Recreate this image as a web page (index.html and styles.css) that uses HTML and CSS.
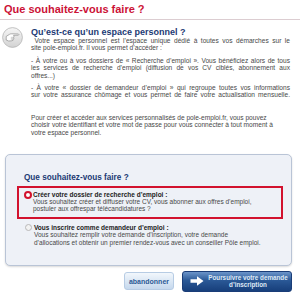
FILE: index.html
```html
<!DOCTYPE html>
<html lang="fr">
<head>
  <meta charset="UTF-8" />
  <title>Que souhaitez-vous faire ?</title>
  <link rel="stylesheet" href="styles.css">
</head>
<body>
  <h1 class="page-title">Que souhaitez-vous faire ?</h1>

  <div class="intro">
    <div class="intro-icon">
      <svg width="21" height="21" viewBox="0 0 21 21">
        <defs>
          <linearGradient id="disc" x1="0" y1="0" x2="0" y2="1">
            <stop offset="0" stop-color="#f6f6f6"/>
            <stop offset="1" stop-color="#d2d2d2"/>
          </linearGradient>
        </defs>
        <circle cx="10.5" cy="10.5" r="9.9" fill="url(#disc)" stroke="#b4b4b4" stroke-width="0.8"/>
        <path d="M4.2 9.4 L7.6 7.3 Q8.6 6.7 9.8 6.8 L16.4 7 Q17.4 7.4 16.4 8.2 L11.6 8.3 L12 9.3 L11.6 10.3 L11.9 11.3 L11.2 12.3 L11.2 13.2 L10 13.8 L6.6 14 L4.2 13 Z"
              fill="#fff" stroke="#8c8c8c" stroke-width="0.7" stroke-linejoin="round"/>
        <path d="M8.8 10.3 H11.6 M8.8 11.3 H11.8 M8.8 12.3 H11.2" stroke="#a6a6a6" stroke-width="0.5"/>
      </svg>
    </div>
    <div class="intro-text">
      <h2>Qu’est-ce qu’un espace personnel ?</h2>
      <p><span class="jline">&nbsp;Votre espace personnel est l’espace unique dédié à toutes vos démarches sur le</span>site pole-emploi.fr. Il vous permet d’accéder :</p>
      <p><span class="jline">- À votre ou à vos dossiers de « Recherche d’emploi ». Vous bénéficiez alors de tous</span><span class="jline">les services de recherche d’emploi (diffusion de vos CV ciblés, abonnement aux</span>offres...)</p>
      <p><span class="jline">- À votre « dossier de demandeur d’emploi » qui regroupe toutes vos informations</span><span class="jline">sur votre assurance chômage et vous permet de faire votre actualisation mensuelle.</span></p>
      <p class="gap">Pour créer et accéder aux services personnalisés de pole-emploi.fr, vous pouvez<br>choisir votre identifiant et votre mot de passe pour vous connecter à tout moment à<br>votre espace personnel.</p>
    </div>
  </div>

  <div class="choice-box">
    <h3>Que souhaitez-vous faire ?</h3>

    <label class="option selected">
      <span class="radio"></span>
      <span class="option-text">
        <strong>Créer votre dossier de recherche d’emploi :</strong>
        Vous souhaitez créer et diffuser votre CV, vous abonner aux offres d’emploi,<br>
        postuler aux offrespar télécandidatures ?
      </span>
    </label>

    <label class="option">
      <span class="radio"></span>
      <span class="option-text">
        <strong>Vous inscrire comme demandeur d’emploi :</strong>
        Vous souhaitez remplir votre demande d’inscription, votre demande<br>
        d’allocations et obtenir un premier rendez-vous avec un conseiller Pôle emploi.
      </span>
    </label>
  </div>

  <div class="actions">
    <button class="btn-cancel">abandonner</button>
    <button class="btn-next">
      <svg width="14" height="10" viewBox="0 0 14 10">
        <path d="M0.5 3.3 H7 V0.3 L13.5 5 L7 9.7 V6.7 H0.5 Z" fill="#fff"/>
      </svg>
      <span>Poursuivre votre demande<br>d’inscription</span>
    </button>
  </div>
</body>
</html>
```

FILE: styles.css
```css
body {
  font-family: "Liberation Sans", Arial, sans-serif;
  margin: 0;
  background: #fff;
  color: #484848;
}

.page-title {
  margin: 0;
  padding: 3px 4px 3px;
  font-size: 11px;
  line-height: 13px;
  color: #cc1236;
  border-bottom: 1px solid #dccdd1;
}

.intro {
  display: flex;
  padding: 8px 10px 0 2px;
}

.intro-icon {
  width: 29px;
  flex: none;
  margin-top: -1px;
}

.intro-text {
  flex: 1;
}

.intro-text h2 {
  margin: 0;
  font-size: 9px;
  line-height: 9px;
  color: #1c3a74;
}

.intro-text p {
  margin: 0 0 5px;
  font-size: 6.6px;
  line-height: 7.4px;
}

.intro-text p.gap {
  margin-top: 15px;
}

.jline {
  display: block;
  text-align: justify;
  text-align-last: justify;
}

.choice-box {
  margin: 13px 8px 0 5px;
  padding: 18px 8px 12px 11px;
  background: #eef1f7;
  border: 1px solid #b9c4d6;
  border-radius: 5px;
  box-shadow: 0 1px 2px rgba(0, 0, 0, 0.15);
}

.choice-box h3 {
  margin: 0 0 3px 7px;
  font-size: 8.2px;
  line-height: 10px;
  color: #1c3a74;
}

.option {
  display: flex;
  align-items: flex-start;
  padding: 2.5px 4px 4.5px 5px;
  font-size: 6.5px;
  line-height: 7.4px;
  border: 2px solid transparent;
}

.option.selected {
  border-color: #d2122e;
}

.option strong {
  display: block;
  color: #222;
}

.radio {
  flex: none;
  width: 5px;
  height: 5px;
  margin: 0.5px 2px 0 1px;
  border-radius: 50%;
  border: 1px solid #b8b8b8;
  background: #f2f2f2;
}

.option.selected .radio {
  width: 4px;
  height: 4px;
  margin: 0 1px 0 0;
  border: 2px solid #d2122e;
  background: #fff;
}

.actions {
  display: flex;
  justify-content: flex-end;
  align-items: center;
  gap: 8px;
  padding: 5px 8px 0;
}

.btn-cancel {
  font-family: inherit;
  font-size: 7px;
  line-height: 9px;
  font-weight: bold;
  color: #2a5a96;
  padding: 3.5px 4px;
  border: 1px solid #b7cce4;
  border-radius: 3px;
  background: linear-gradient(#f2f7fc, #c5d8ed);
}

.btn-next {
  display: flex;
  align-items: center;
  gap: 2px;
  width: 110px;
  font-family: inherit;
  font-size: 6.3px;
  font-weight: bold;
  line-height: 7.6px;
  padding: 2px 1px 2px 7px;
  border: 1px solid #1a3d78;
  border-radius: 3px;
  background: linear-gradient(#6b94c9, #2a5896 45%, #173f7b);
}

.btn-next span {
  flex: 1;
  text-align: center;
  white-space: nowrap;
  color: #dfe9f6;
}
```
